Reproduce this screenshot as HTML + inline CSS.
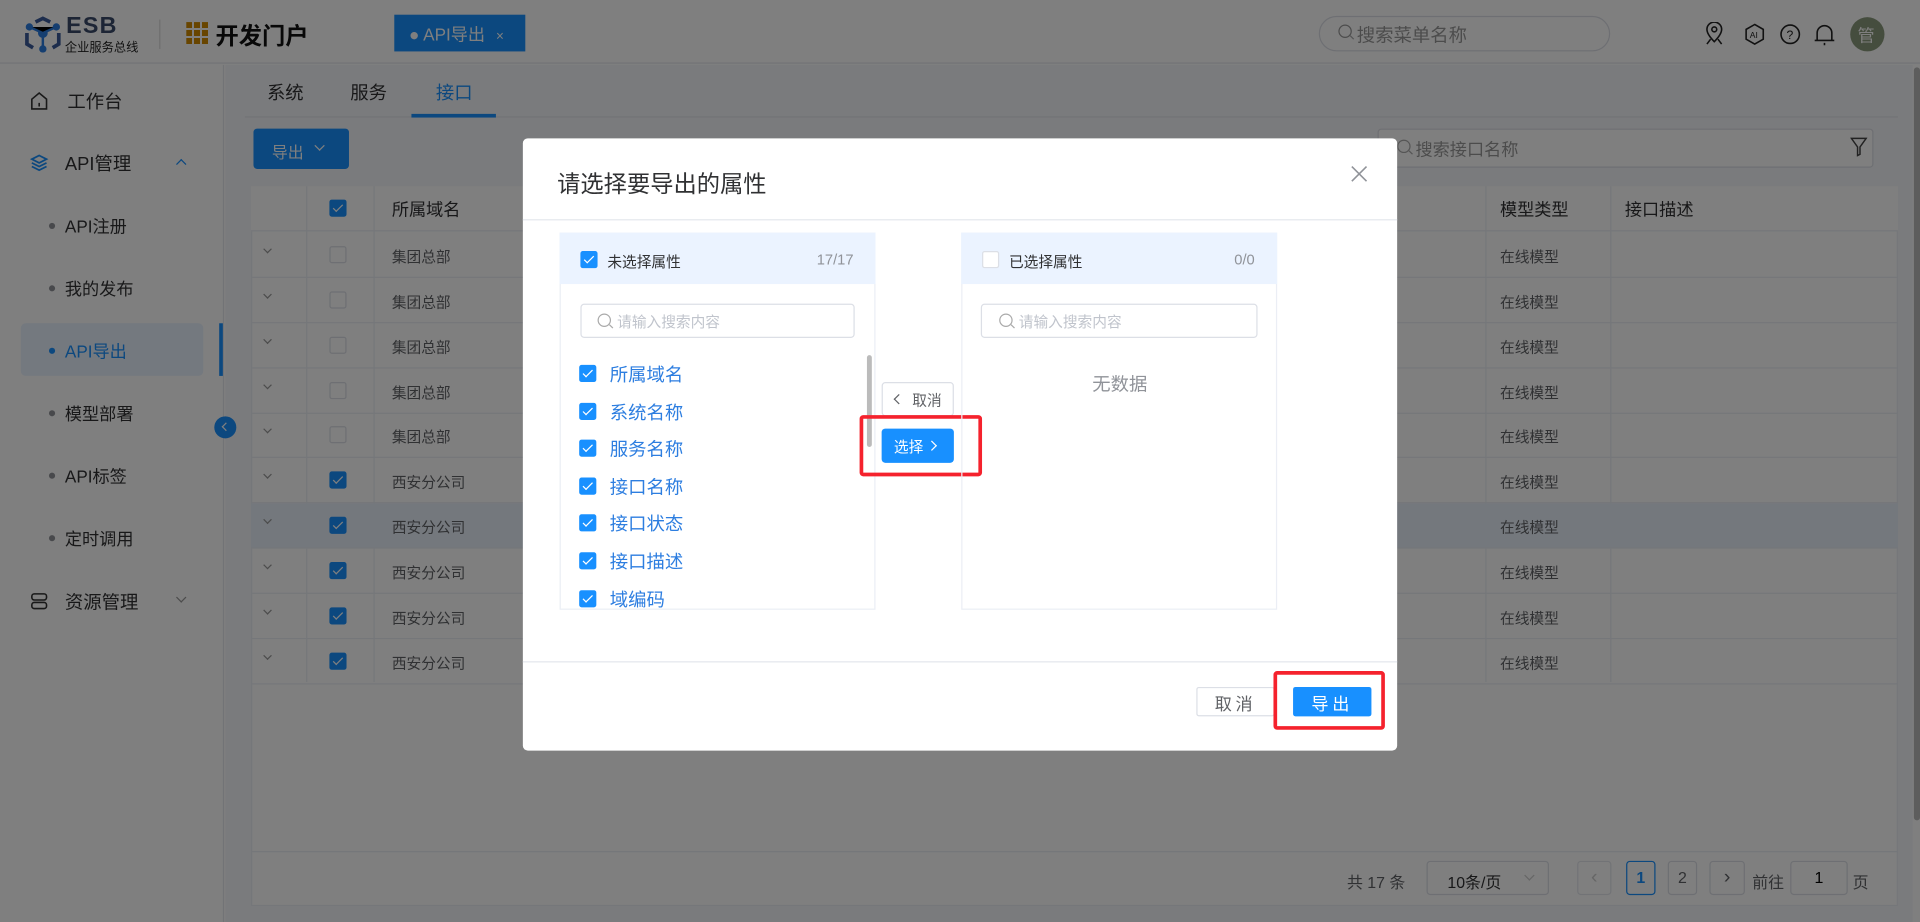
<!DOCTYPE html>
<html><head><meta charset="utf-8"><style>
*{box-sizing:border-box;margin:0;padding:0}
html,body{width:1920px;height:922px;overflow:hidden;background:#fff;font-family:"Liberation Sans","Noto Sans CJK SC",sans-serif}
#w{position:absolute;left:0;top:0;width:1568px;height:753px;transform:scale(1.22449);transform-origin:0 0;background:#fff}
.a{position:absolute}
.t{position:absolute;white-space:nowrap;color:#303133}
.cb{position:absolute;width:14px;height:14px;border:1px solid #dcdfe6;border-radius:2px;background:#fff}
.cb.on{background:#1890ff;border-color:#1890ff}
.cb.on:after{content:"";position:absolute;left:4px;top:1px;width:3px;height:7px;border:solid #fff;border-width:0 1.5px 1.5px 0;transform:rotate(45deg)}
.row{position:absolute;left:205px;width:1345px;height:37px;border-bottom:1px solid #ebeef5}
.mi{position:absolute;left:40px;font-size:14px;color:#303133}
.dot{position:absolute;left:40px;width:5px;height:5px;border-radius:50%;background:#909399}
.chev{position:absolute;width:6px;height:6px;border:solid #999;border-width:0 1px 1px 0;transform:rotate(45deg)}
.mag{position:absolute;width:11px;height:11px;border:1.3px solid #aaa;border-radius:50%}
.mag:after{content:"";position:absolute;left:8px;top:9px;width:4px;height:1.3px;background:#aaa;transform:rotate(45deg)}
</style></head><body><div id="w">
<!-- header -->
<div class="a" style="left:0;top:0;width:1568px;height:52px;border-bottom:1px solid #e4e7ed;background:#fff"></div>
<svg class="a" style="left:18px;top:13px" width="34" height="30" viewBox="0 0 34 30"><g stroke="#3a5a9a" stroke-width="3" fill="none"><path d="M11 5l6-3 6 3"/><path d="M4 14v9l5 3M30 14v9l-5 3"/></g><g fill="#2a7de1"><circle cx="17" cy="14" r="4"/><circle cx="6" cy="9" r="3"/><circle cx="28" cy="9" r="3"/><circle cx="17" cy="27" r="3"/></g><path d="M6 9l11 5 11-5M17 14v13" stroke="#2a7de1" stroke-width="2"/></svg>
<div class="t" style="left:54px;top:11px;font-size:19px;font-weight:bold;color:#3a4a6a;letter-spacing:1px">ESB</div>
<div class="t" style="left:53px;top:30px;font-size:10px;color:#222">企业服务总线</div>
<div class="a" style="left:130px;top:16px;width:1px;height:24px;background:#ddd"></div>
<div class="a" style="left:152px;top:18px;width:18px;height:18px;background:repeating-linear-gradient(90deg,#d08a00 0 5px,transparent 5px 6.5px),#fff;-webkit-mask:repeating-linear-gradient(0deg,#000 0 5px,transparent 5px 6.5px)"></div>
<div class="t" style="left:176px;top:15px;font-size:19px;font-weight:bold;color:#111">开发门户</div>
<div class="a" style="left:322px;top:12px;width:107px;height:30px;background:#1890ff"></div>
<div class="t" style="left:334px;top:18px;font-size:14px;color:#fff">● API导出 <span style="font-size:11px;margin-left:5px">×</span></div>
<div class="a" style="left:1077px;top:13px;width:238px;height:29px;border:1px solid #dcdfe6;border-radius:15px"></div>
<div class="mag" style="left:1093px;top:20px;border-color:#999"></div>
<div class="t" style="left:1108px;top:18px;font-size:15px;color:#999">搜索菜单名称</div>
<svg class="a" style="left:1390px;top:18px" width="120" height="20" viewBox="0 0 120 20" fill="none" stroke="#222" stroke-width="1.3"><path d="M10 16c-4-4-6-7-6-10a6 6 0 0112 0c0 3-2 6-6 10zM4 18l3-4M16 18l-3-4"/><circle cx="10" cy="6" r="2"/><path d="M43 2l7 4v8l-7 4-7-4V6z"/><text x="39" y="13" font-size="7" fill="#222" stroke="none" font-family="Liberation Sans">AI</text><circle cx="72" cy="10" r="7.5"/><text x="69" y="14" font-size="10" fill="#222" stroke="none" font-family="Liberation Sans">?</text><path d="M94 15V9a6 6 0 0112 0v6zM92 15h16M100 17v2"/></svg>
<div class="a" style="left:1511px;top:14px;width:28px;height:28px;border-radius:50%;background:#8b9a7c"></div>
<div class="t" style="left:1517px;top:19px;font-size:14px;color:#fff">管</div>
<!-- sidebar -->
<div class="a" style="left:0;top:53px;width:183px;height:700px;border-right:1px solid #e4e7ed;background:#fff"></div>
<svg class="a" style="left:24px;top:74px" width="16" height="16" viewBox="0 0 16 16" fill="none" stroke="#333" stroke-width="1.3"><path d="M2 7l6-5 6 5v8H2z"/><path d="M8 10v3"/></svg>
<div class="mi" style="left:55px;top:72px;font-size:15px">工作台</div>
<svg class="a" style="left:24px;top:125px" width="16" height="16" viewBox="0 0 16 16" fill="none" stroke="#1890ff" stroke-width="1.4"><path d="M8 2l6 3-6 3-6-3zM2 8l6 3 6-3M2 11l6 3 6-3"/></svg>
<div class="mi" style="left:53px;top:123px;font-size:15px">API管理</div>
<div class="chev" style="left:145px;top:131px;transform:rotate(225deg);border-color:#1890ff"></div>
<div class="dot" style="top:182px"></div><div class="mi" style="left:53px;top:175px">API注册</div>
<div class="dot" style="top:233px"></div><div class="mi" style="left:53px;top:226px">我的发布</div>
<div class="a" style="left:17px;top:264px;width:149px;height:43px;background:#e8f2ff;border-radius:4px"></div>
<div class="a" style="left:179px;top:264px;width:3px;height:43px;background:#1890ff"></div>
<div class="dot" style="top:284px;background:#1890ff"></div><div class="mi" style="left:53px;top:277px;color:#1890ff">API导出</div>
<div class="dot" style="top:335px"></div><div class="mi" style="left:53px;top:328px">模型部署</div>
<div class="dot" style="top:386px"></div><div class="mi" style="left:53px;top:379px">API标签</div>
<div class="dot" style="top:437px"></div><div class="mi" style="left:53px;top:430px">定时调用</div>
<svg class="a" style="left:24px;top:483px" width="16" height="16" viewBox="0 0 16 16" fill="none" stroke="#333" stroke-width="1.3"><rect x="2" y="2" width="12" height="5" rx="2"/><rect x="2" y="9" width="12" height="5" rx="2"/></svg>
<div class="mi" style="left:53px;top:481px;font-size:15px">资源管理</div>
<div class="chev" style="left:145px;top:485px"></div>
<!-- content -->
<div class="a" style="left:184px;top:53px;width:1378px;height:700px;background:#f5f7fa"></div>
<div class="a" style="left:175px;top:340px;width:18px;height:18px;border-radius:50%;background:#1890ff"></div>
<div class="chev" style="left:182px;top:346px;width:5px;height:5px;border-color:#fff;transform:rotate(135deg)"></div>
<div class="a" style="left:200px;top:95px;width:1350px;height:1px;background:#e4e7ed"></div>
<div class="t" style="left:218px;top:65px;font-size:15px">系统</div>
<div class="t" style="left:286px;top:65px;font-size:15px">服务</div>
<div class="t" style="left:356px;top:65px;font-size:15px;color:#1890ff">接口</div>
<div class="a" style="left:336px;top:93px;width:69px;height:3px;background:#1890ff"></div>
<div class="a" style="left:207px;top:105px;width:78px;height:33px;background:#1890ff;border-radius:3px"></div>
<div class="t" style="left:222px;top:114px;font-size:13px;color:#fff">导出</div>
<div class="chev" style="left:258px;top:116px;border-color:#fff"></div>
<div class="a" style="left:1125px;top:105px;width:405px;height:32px;border:1px solid #dcdfe6;background:#fff;border-radius:3px"></div>
<div class="mag" style="left:1141px;top:114px"></div>
<div class="t" style="left:1156px;top:112px;font-size:14px;color:#999">搜索接口名称</div>
<svg class="a" style="left:1511px;top:112px" width="14" height="16" viewBox="0 0 14 16" fill="none" stroke="#444" stroke-width="1.2"><path d="M1 1h12L8 8v6l-2 1V8z"/></svg>
<div class="a" style="left:205px;top:152px;width:1345px;height:588px;background:#fff;border:1px solid #ebeef5"></div>
<div class="row" style="top:152px;background:#fff"></div>
<div class="cb on" style="left:269px;top:163px"></div>
<div class="t" style="left:320px;top:161px;font-size:14px">所属域名</div>
<div class="t" style="left:1225px;top:161px;font-size:14px">模型类型</div>
<div class="t" style="left:1327px;top:161px;font-size:14px">接口描述</div>
<div class="a" style="left:1213px;top:152px;width:1px;height:405px;background:#ebeef5"></div>
<div class="a" style="left:1315px;top:152px;width:1px;height:405px;background:#ebeef5"></div>
<div class="a" style="left:250px;top:152px;width:1px;height:405px;background:#ebeef5"></div>
<div class="a" style="left:305px;top:152px;width:1px;height:405px;background:#ebeef5"></div>
<div id="rows"></div>
<div class="a" style="left:205px;top:695px;width:1345px;height:1px;background:#ebeef5"></div>
<div class="t" style="left:1100px;top:710px;font-size:13px;color:#606266">共 17 条</div>
<div class="a" style="left:1165px;top:703px;width:100px;height:28px;border:1px solid #dcdfe6;border-radius:3px;background:#fff"></div>
<div class="t" style="left:1182px;top:710px;font-size:13px">10条/页</div>
<div class="chev" style="left:1246px;top:712px;border-color:#ccc"></div>
<div class="a" style="left:1288px;top:703px;width:28px;height:28px;border:1px solid #e4e7ed;border-radius:3px;color:#ccc;text-align:center;line-height:26px">‹</div>
<div class="a" style="left:1328px;top:703px;width:24px;height:28px;border:1px solid #1890ff;border-radius:3px;color:#1890ff;text-align:center;line-height:26px;font-size:13px;font-weight:bold">1</div>
<div class="a" style="left:1362px;top:703px;width:24px;height:28px;border:1px solid #dcdfe6;border-radius:3px;text-align:center;line-height:26px;font-size:13px;color:#606266">2</div>
<div class="a" style="left:1396px;top:703px;width:29px;height:28px;border:1px solid #dcdfe6;border-radius:3px;text-align:center;line-height:26px;color:#606266">›</div>
<div class="t" style="left:1431px;top:710px;font-size:13px;color:#606266">前往</div>
<div class="a" style="left:1462px;top:703px;width:47px;height:28px;border:1px solid #dcdfe6;border-radius:3px;text-align:center;line-height:26px;font-size:13px;background:#fff">1</div>
<div class="t" style="left:1513px;top:710px;font-size:13px;color:#606266">页</div>
<div class="a" style="left:1563px;top:55px;width:5px;height:615px;background:#bbb;border-radius:3px"></div>
<!-- overlay -->
<div class="a" style="left:0;top:0;width:1568px;height:753px;background:rgba(0,0,0,0.5)"></div>
<!-- dialog -->
<div class="a" style="left:427px;top:113px;width:714px;height:500px;background:#fff;border-radius:4px"></div>
<div class="t" style="left:455px;top:136px;font-size:19px">请选择要导出的属性</div>
<svg class="a" style="left:1103px;top:135px" width="14" height="14" viewBox="0 0 14 14" stroke="#909399" stroke-width="1.3"><path d="M1 1l12 12M13 1L1 13"/></svg>
<div class="a" style="left:427px;top:179px;width:714px;height:1px;background:#e4e7ed"></div>
<div class="a" style="left:457px;top:190px;width:258px;height:308px;border:1px solid #ebeef5"></div>
<div class="a" style="left:457px;top:190px;width:258px;height:42px;background:#ebf3ff"></div>
<div class="cb on" style="left:474px;top:205px"></div>
<div class="t" style="left:496px;top:205px;font-size:12px">未选择属性</div>
<div class="t" style="left:667px;top:205px;font-size:12px;color:#909399">17/17</div>
<div class="a" style="left:474px;top:248px;width:224px;height:28px;border:1px solid #dcdfe6;border-radius:3px"></div>
<div class="mag" style="left:488px;top:256px"></div>
<div class="t" style="left:504px;top:254px;font-size:12px;color:#c0c4cc">请输入搜索内容</div>
<div class="a" style="left:458px;top:285px;width:256px;height:212px;overflow:hidden" id="lst"></div>
<div class="a" style="left:708px;top:290px;width:4px;height:75px;background:#bbb;border-radius:2px"></div>
<div class="a" style="left:720px;top:312px;width:59px;height:28px;border:1px solid #dcdfe6;border-radius:3px;background:#fff"></div>
<div class="chev" style="left:731px;top:323px;transform:rotate(135deg);border-color:#606266"></div>
<div class="t" style="left:745px;top:318px;font-size:12px;color:#606266">取消</div>
<div class="a" style="left:720px;top:350px;width:59px;height:28px;background:#1890ff;border-radius:3px"></div>
<div class="t" style="left:730px;top:356px;font-size:12px;color:#fff">选择</div>
<div class="chev" style="left:758px;top:361px;transform:rotate(-45deg);border-color:#fff"></div>
<div class="a" style="left:702px;top:339px;width:100px;height:50px;border:3px solid #f5222d;border-radius:3px"></div>
<div class="a" style="left:785px;top:190px;width:258px;height:308px;border:1px solid #ebeef5"></div>
<div class="a" style="left:785px;top:190px;width:258px;height:42px;background:#ebf3ff"></div>
<div class="cb" style="left:802px;top:205px"></div>
<div class="t" style="left:824px;top:205px;font-size:12px">已选择属性</div>
<div class="t" style="left:1008px;top:205px;font-size:12px;color:#909399">0/0</div>
<div class="a" style="left:801px;top:248px;width:226px;height:28px;border:1px solid #dcdfe6;border-radius:3px"></div>
<div class="mag" style="left:816px;top:256px"></div>
<div class="t" style="left:832px;top:254px;font-size:12px;color:#c0c4cc">请输入搜索内容</div>
<div class="t" style="left:892px;top:303px;font-size:15px;color:#909399">无数据</div>
<div class="a" style="left:427px;top:540px;width:714px;height:1px;background:#e4e7ed"></div>
<div class="a" style="left:977px;top:561px;width:64px;height:24px;border:1px solid #dcdfe6;border-radius:2px"></div>
<div class="t" style="left:992px;top:565px;font-size:14px;color:#606266;letter-spacing:3px">取消</div>
<div class="a" style="left:1056px;top:561px;width:64px;height:24px;background:#1890ff;border-radius:2px"></div>
<div class="t" style="left:1071px;top:565px;font-size:14px;color:#fff;letter-spacing:3px">导出</div>
<div class="a" style="left:1040px;top:548px;width:91px;height:48px;border:3px solid #f5222d;border-radius:3px"></div>
</div>
<script>
var r='',ys=[190,227,264,301,337,374,411,448,485,522];
for(var i=0;i<10;i++){var y=ys[i],on=i>=5;r+='<div class="row" style="top:'+y+'px;'+(i==6?'background:#e8f0fa':'')+'"></div><div class="chev" style="left:216px;top:'+(y+11)+'px;width:5px;height:5px"></div><div class="cb'+(on?' on':'')+'" style="left:269px;top:'+(y+11)+'px"></div><div class="t" style="left:320px;top:'+(y+11)+'px;font-size:12px;color:#606266">'+(on?'西安分公司':'集团总部')+'</div><div class="t" style="left:1225px;top:'+(y+11)+'px;font-size:12px;color:#606266">在线模型</div>';}
document.getElementById('rows').outerHTML=r;
var it=['所属域名','系统名称','服务名称','接口名称','接口状态','接口描述','域编码'],l='';
for(var j=0;j<7;j++){var y=13+j*30.6;l+='<div class="cb on" style="left:15px;top:'+y+'px"></div><div class="t" style="left:40px;top:'+(y-3)+'px;font-size:15px;color:#2d7ee0">'+it[j]+'</div>';}
document.getElementById('lst').innerHTML=l;
</script>
</body></html>
